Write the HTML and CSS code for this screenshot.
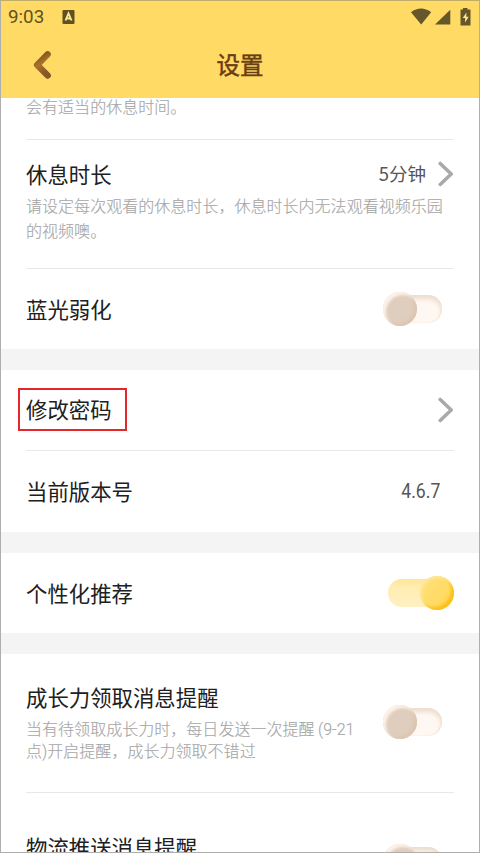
FILE: index.html
```
<!DOCTYPE html>
<html lang="zh-CN">
<head>
<meta charset="utf-8">
<title>设置</title>
<link rel="stylesheet" href="styles.css">
</head>
<body>
<div class="screen">
  <header class="header">
    <div class="status">
      <span class="clock">9:03</span>
      <svg class="app-badge" viewBox="0 0 12 14"><path fill="#5f5122" d="M1 0h10q1 0 1 1v12q0 1-1 1H1q-1 0-1-1V1q0-1 1-1z"/><path fill="none" stroke="#ffe98f" stroke-width="1.9" d="M3 10.500 6 3.500 9 10.500M4 8.500h4"/></svg>
      <svg class="status-icons" viewBox="0 0 60 18"><g fill="#65572a"><path d="M0 4.300Q10-3.200 20.200 4.300L10.200 16.500z"/><path d="M24 16.500 39.300 1.800V16.500z"/><path d="M52 0h4.500v1.600h3V17.500h-10V1.600H52z"/></g><path fill="#ffe68a" d="M55.500 4.500 51.700 10h2.400v4.600l3.600-5.800h-2.500z"/></svg>
    </div>
    <div class="navbar">
      <svg class="back" viewBox="0 0 20 30">
        <defs><linearGradient id="backFill" x1="0" y1="0" x2="0.3" y2="1"><stop offset="0" stop-color="#7b4a18"/><stop offset="0.500" stop-color="#a9722f"/><stop offset="1" stop-color="#8a5726"/></linearGradient></defs>
        <path d="M15.700 4.300 5.200 15 15.700 25.600" fill="none" stroke="url(#backFill)" stroke-width="6.400" stroke-linecap="round" stroke-linejoin="round"/>
      </svg>
      <h1 class="title">设置</h1>
    </div>
  </header>

  <main class="list">
    <section class="group">
      <div class="row row-tail"><p class="desc">会有适当的休息时间。</p></div>
      <div class="row row-rest">
        <div class="line">
          <span class="label">休息时长</span>
          <span class="value">5分钟</span>
          <svg class="chevron" viewBox="0 0 16 26"><path d="M2.200 2.400 13.200 13 2.200 23.400"/></svg>
        </div>
        <p class="desc desc-loose">请设定每次观看的休息时长，休息时长内无法观看视频乐园的视频噢。</p>
      </div>
      <div class="row row-single">
        <span class="label">蓝光弱化</span>
        <span class="toggle off"><i class="knob"></i></span>
      </div>
    </section>

    <section class="group">
      <div class="row row-single">
        <span class="highlight"><span class="label">修改密码</span></span>
        <svg class="chevron" viewBox="0 0 16 26"><path d="M2.200 2.400 13.200 13 2.200 23.400"/></svg>
      </div>
      <div class="row row-single row-version">
        <span class="label">当前版本号</span>
        <span class="version">4.6.7</span>
      </div>
    </section>

    <section class="group">
      <div class="row row-single">
        <span class="label">个性化推荐</span>
        <span class="toggle on"><i class="knob"></i></span>
      </div>
    </section>

    <section class="group">
      <div class="row row-growth">
        <div class="copy">
          <span class="label">成长力领取消息提醒</span>
          <p class="desc">当有待领取成长力时，每日发送一次提醒 <span class="range">(9-21</span><br>点<span class="range">)</span>开启提醒，成长力领取不错过</p>
        </div>
        <span class="toggle off"><i class="knob"></i></span>
      </div>
      <div class="row row-delivery">
        <span class="label">物流推送消息提醒</span>
        <span class="toggle off"><i class="knob"></i></span>
      </div>
    </section>
  </main>
</div>
</body>
</html>
```
FILE: styles.css
```
* { box-sizing: border-box; }
html, body { margin: 0; height: 100%; overflow: hidden; }
body { font-family: "Noto Sans CJK SC", sans-serif; color: #202020; background: #fff; }
h1, p { margin: 0; font-weight: 400; }

.screen { display: flex; flex-direction: column; width: 480px; height: 853px; border: 1px solid #aeaeae; border-top-color: #c2ad68; background: #fff; overflow: hidden; }

.header { flex: none; height: 97px; background: #ffdb66; }
.status { display: flex; align-items: center; height: 31px; padding: 0 8px 0 7px; }
.clock { width: 54px; font: 18.800px/30px Roboto, sans-serif; color: #5f5122; }
.app-badge { width: 13px; height: 14px; }
.status-icons { width: 60px; height: 18px; margin-left: auto; }
.navbar { display: grid; grid-template-columns: 80px 1fr 80px; align-items: center; height: 66px; }
.back { width: 20px; height: 30px; margin: 0 0 0 31px; }
.title { margin-top: -2px; font-size: 23.500px; line-height: 34px; text-align: center; color: #6b3d12; -webkit-text-stroke: 0.500px #6b3d12; }

.list { flex: 1; min-height: 0; overflow: hidden; }
.group + .group { border-top: 21px solid #f4f4f4; }
.row { margin: 0 25px; }
.row + .row { border-top: 1px solid #e8e8e8; }
.row-tail { height: 41px; }
.row-tail .desc { line-height: 17px; }
.row-rest { height: 129px; padding-top: 18px; }
.line { display: flex; align-items: center; height: 32px; }
.row-single { display: flex; align-items: center; justify-content: space-between; height: 81px; }
.group > .row-single:first-child { height: 80px; }
.row-version { height: 82px; }

.label { display: block; padding-bottom: 1px; font-size: 21.400px; line-height: 29px; white-space: nowrap; }
.row-single .label { padding-bottom: 2px; }
.value { margin: 0 12px 2px auto; font-size: 18.500px; line-height: 28px; color: #555; }
.chevron { flex: none; width: 16px; height: 26px; fill: none; stroke: #a9a9a9; stroke-width: 3.500; stroke-linecap: round; stroke-linejoin: round; }
.version { margin: 0 14px 2px 0; font: 20px/28px Roboto, sans-serif; color: #555; transform: scaleX(.88); transform-origin: right; }
.desc { font-size: 16.050px; line-height: 20px; color: #a6a6a6; font-weight: 300; -webkit-text-stroke: 0.150px #a6a6a6; }
.desc-loose { margin-top: 3px; line-height: 25px; }
.range { font-family: Roboto, sans-serif; font-size: 16px; }

.highlight { display: flex; align-items: center; width: 109px; height: 43px; margin: -2px 0 0 -8px; padding-left: 6px; border: 2px solid #e5262b; }

.toggle { flex: none; position: relative; width: 56px; height: 28px; border-radius: 14px; }
.off { margin-right: 12px; background: #fff8f2; box-shadow: inset 0 4px 5px #ecdccf, inset -1px 0 2px #f3e5da; }
.on { width: 66px; background: linear-gradient(#ffe596, #ffedb3 30%, #fff0c2); }
.knob { position: absolute; top: -3px; width: 34px; height: 34px; border-radius: 50%; }
.off .knob { left: -3px; background: #dfcdbd; box-shadow: inset 3px 3px 3px #fdf3ea, inset -3px -2px 3px #dcc5b0; }
.on .knob { right: 0; background: linear-gradient(135deg, #ffdf7c, #ffdc65 60%, #ffcf45); box-shadow: inset 2px 2px 3px #ffe79b, inset -3px -3px 3px #fbc11a; }

.row-growth { display: flex; align-items: center; justify-content: space-between; height: 138px; }
.copy { padding-bottom: 2px; }
.copy .desc { margin-top: 6px; white-space: nowrap; }
.row-growth .toggle { top: -1px; }
.row-delivery { display: flex; justify-content: space-between; height: 120px; padding-top: 39px; }
.row-delivery .toggle { top: 15px; }
```
